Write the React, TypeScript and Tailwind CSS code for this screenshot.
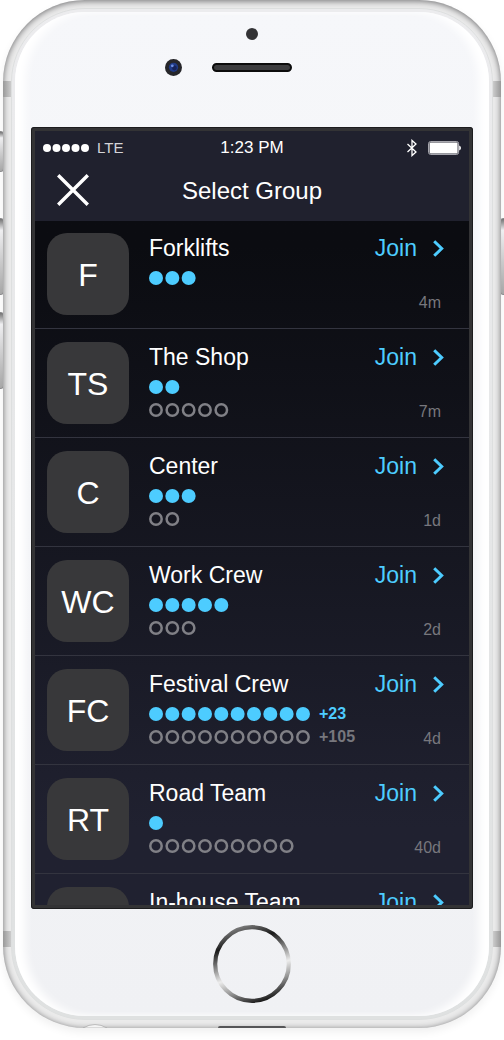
type Group = {
  initials: string;
  name: string;
  active: number;
  idle: number;
  moreActive?: number;
  moreIdle?: number;
  age: string;
};

const groups: Group[] = [
  { initials: "F", name: "Forklifts", active: 3, idle: 0, age: "4m" },
  { initials: "TS", name: "The Shop", active: 2, idle: 5, age: "7m" },
  { initials: "C", name: "Center", active: 3, idle: 2, age: "1d" },
  { initials: "WC", name: "Work Crew", active: 5, idle: 3, age: "2d" },
  { initials: "FC", name: "Festival Crew", active: 10, idle: 10, moreActive: 23, moreIdle: 105, age: "4d" },
  { initials: "RT", name: "Road Team", active: 1, idle: 9, age: "40d" },
  { initials: "", name: "In-house Team", active: 0, idle: 0, age: "" },
];

const DOT_PITCH = 16.33;

function Dots({ count, filled }: { count: number; filled: boolean }) {
  const width = Math.ceil((count - 1) * DOT_PITCH + 14);
  return (
    <svg width={width} height={14} aria-hidden="true">
      {Array.from({ length: count }, (_, i) =>
        filled ? (
          <circle key={i} cx={7 + i * DOT_PITCH} cy={7} r={7} fill="#4dccff" />
        ) : (
          <circle
            key={i}
            cx={7 + i * DOT_PITCH}
            cy={7}
            r={5.7}
            fill="none"
            stroke="#808086"
            strokeWidth={2.5}
          />
        ),
      )}
    </svg>
  );
}

function StatusBar() {
  return (
    <div className="grid h-[34px] grid-cols-3 items-center px-2 text-white">
      <div className="flex items-center gap-2">
        <svg width="46" height="8" fill="currentColor" aria-hidden="true">
          {[4, 13.5, 23, 32.5, 42].map((cx) => (
            <circle key={cx} cx={cx} cy="4" r="4" />
          ))}
        </svg>
        <span className="text-[15px] leading-5 text-[#d4d4d8]">LTE</span>
      </div>
      <span className="text-center text-[17px] leading-5">1:23 PM</span>
      <div className="flex items-center justify-end gap-[11px]">
        <svg width="10" height="18" viewBox="0 0 10 18" fill="none" stroke="currentColor" strokeWidth="1.3" aria-hidden="true">
          <path d="M0.5 5 L9 13 L5 16.6 V1.4 L9 5 L0.5 13" />
        </svg>
        <svg width="33" height="14" viewBox="0 0 33 14" aria-hidden="true">
          <rect x="0.6" y="0.6" width="30" height="12.8" rx="2" fill="none" stroke="#b6b6bc" strokeWidth="1" />
          <rect x="1.6" y="1.6" width="28" height="10.8" rx="1" fill="#fff" />
          <path d="M31.2 4.4 Q33 5.2 33 7 Q33 8.8 31.2 9.6 Z" fill="#fff" />
        </svg>
      </div>
    </div>
  );
}

function GroupRow({ group }: { group: Group }) {
  return (
    <li className="flex border-t border-[#33343f] px-3 py-[13px] first:border-t-0 first:pt-3">
      <div className="flex size-[82px] shrink-0 items-center justify-center rounded-[20px] bg-[#38383a] pt-[2px] text-[32px] leading-10 text-white">
        {group.initials}
      </div>
      <div className="ml-5 flex min-w-0 flex-1 flex-col">
        <h2 className="text-[23px] leading-[30px] whitespace-nowrap text-white">{group.name}</h2>
        {group.active > 0 && (
          <div className="mt-2 flex h-[14px] items-center gap-[9px]">
            <Dots count={group.active} filled />
            {group.moreActive && (
              <span className="text-base leading-[14px] font-bold text-[#4dccff]">+{group.moreActive}</span>
            )}
          </div>
        )}
        {group.idle > 0 && (
          <div className="mt-[9px] flex h-[14px] items-center gap-[9px]">
            <Dots count={group.idle} filled={false} />
            {group.moreIdle && (
              <span className="text-base leading-[14px] font-bold text-[#77777d]">+{group.moreIdle}</span>
            )}
          </div>
        )}
      </div>
      <div className="flex shrink-0 flex-col items-end justify-between pr-4 pb-[2px]">
        <button type="button" className="-mr-[3px] flex items-center gap-4 text-[23px] leading-[30px] text-[#4dccff]">
          Join
          <svg width="11" height="17" viewBox="0 0 11 17" fill="none" stroke="currentColor" strokeWidth="3" aria-hidden="true">
            <path d="M1.2 1.2 L8.7 8.5 L1.2 15.8" />
          </svg>
        </button>
        <span className="text-base leading-5 text-[#77777d]">{group.age}</span>
      </div>
    </li>
  );
}

function GroupScreen() {
  return (
    <main className="aspect-[442/782] overflow-hidden rounded-[3px] border-4 border-[#333335] bg-linear-to-b from-[#0b0c11] from-15% to-[#202130] to-90% outline-1 -outline-offset-1 outline-[#1c1c1e]">
      <header className="bg-[#20212e]">
        <StatusBar />
        <div className="grid h-14 grid-cols-[1fr_auto_1fr] items-center pb-[6px]">
          <button type="button" aria-label="Close" className="ml-[22px] justify-self-start text-white">
            <svg width="32" height="32" viewBox="0 0 32 32" stroke="currentColor" strokeWidth="3.4" aria-hidden="true">
              <path d="M1.2 1.2 L30.8 30.8 M30.8 1.2 L1.2 30.8" />
            </svg>
          </button>
          <h1 className="pt-[2px] text-2xl leading-8 text-white">Select Group</h1>
        </div>
      </header>
      <ul>
        {groups.map((group) => (
          <GroupRow key={group.name} group={group} />
        ))}
      </ul>
    </main>
  );
}

function SideButton({ className }: { className: string }) {
  return (
    <div
      className={`absolute w-2 rounded-[3px] border border-[#8e8e90] bg-linear-to-b from-[#777] via-[#f4f4f6] via-15% to-[#aaa] ${className}`}
    />
  );
}

export default function App() {
  return (
    <div className="relative overflow-hidden bg-white px-[3px] pb-3 font-['Liberation_Sans',Arial,sans-serif]">
      <SideButton className="top-[131px] -left-1 h-[41px]" />
      <SideButton className="top-[218px] -left-1 h-[77px]" />
      <SideButton className="top-[312px] -left-1 h-[77px]" />
      <SideButton className="top-[218px] -right-1 h-[77px]" />

      <div className="relative overflow-hidden rounded-[82px] bg-[#ebebeb] p-2 shadow-[inset_0_1px_6px_#6c6c6e,0_4px_8px_#00000010]">
        <div className="absolute top-[81px] left-0 h-4 w-2 bg-linear-to-r from-[#999] to-[#ccc]" />
        <div className="absolute top-[81px] right-0 h-4 w-2 bg-linear-to-l from-[#999] to-[#ccc]" />
        <div className="absolute bottom-[81px] left-0 h-4 w-2 bg-linear-to-r from-[#999] to-[#ccc]" />
        <div className="absolute right-0 bottom-[81px] h-4 w-2 bg-linear-to-l from-[#999] to-[#ccc]" />
        <svg className="absolute bottom-0 left-20 h-1 w-6" viewBox="0 0 24 4" aria-hidden="true">
          <path d="M0 4 Q12 -3 24 4 Z" fill="#f4f4f4" stroke="#aaa" strokeWidth="0.7" />
        </svg>
        <div className="absolute inset-x-0 bottom-0 flex justify-center">
          <div className="h-[2px] w-[68px] rounded-t-sm bg-[#555557]" />
        </div>

        <div className="rounded-[74px] border border-[#dddfdf] bg-linear-to-b from-[#ececee] to-[#dfe1e1] p-[3px]">
          <div className="rounded-[70px] bg-linear-to-b from-[#f6f7fa] to-[#f0f1f4] px-4 shadow-[inset_12px_0_8px_-2px_#fff,inset_-12px_0_8px_-2px_#fff]">
            <div className="flex h-[115px] flex-col items-center pt-4">
              <div className="size-3 rounded-full bg-[#333335]" />
              <div className="mt-[19px] grid w-full grid-cols-[1fr_80px_1fr] items-center">
                <svg className="mr-[30px] justify-self-end" width="17" height="17" viewBox="0 0 17 17" aria-hidden="true">
                  <circle cx="8.5" cy="8.5" r="8.5" fill="#26262a" />
                  <circle cx="8.5" cy="8.3" r="4.6" fill="#1f3a86" />
                  <circle cx="9.4" cy="9" r="2.4" fill="#16235a" />
                  <circle cx="7.3" cy="6.8" r="1.4" fill="#6f8fe0" />
                </svg>
                <div className="h-[9px] rounded-full border-2 border-[#0c0c0c] bg-[#3c3c3e]" />
              </div>
            </div>

            <GroupScreen />

            <div className="flex h-[107px] justify-center pt-4">
              <button type="button" aria-label="Home" className="size-[78px]">
                <svg viewBox="0 0 78 78" fill="none" aria-hidden="true">
                  <defs>
                    <linearGradient id="home-ring" x1="0.34" y1="0" x2="0.66" y2="1">
                      <stop offset="0" stopColor="#777" />
                      <stop offset="0.2" stopColor="#1a1a1a" />
                      <stop offset="0.32" stopColor="#555" />
                      <stop offset="0.6" stopColor="#ececec" />
                      <stop offset="0.78" stopColor="#999" />
                      <stop offset="1" stopColor="#1a1a1a" />
                    </linearGradient>
                  </defs>
                  <circle cx="39" cy="39" r="36.8" stroke="url(#home-ring)" strokeWidth="4.2" />
                </svg>
              </button>
            </div>
          </div>
        </div>
      </div>
    </div>
  );
}
